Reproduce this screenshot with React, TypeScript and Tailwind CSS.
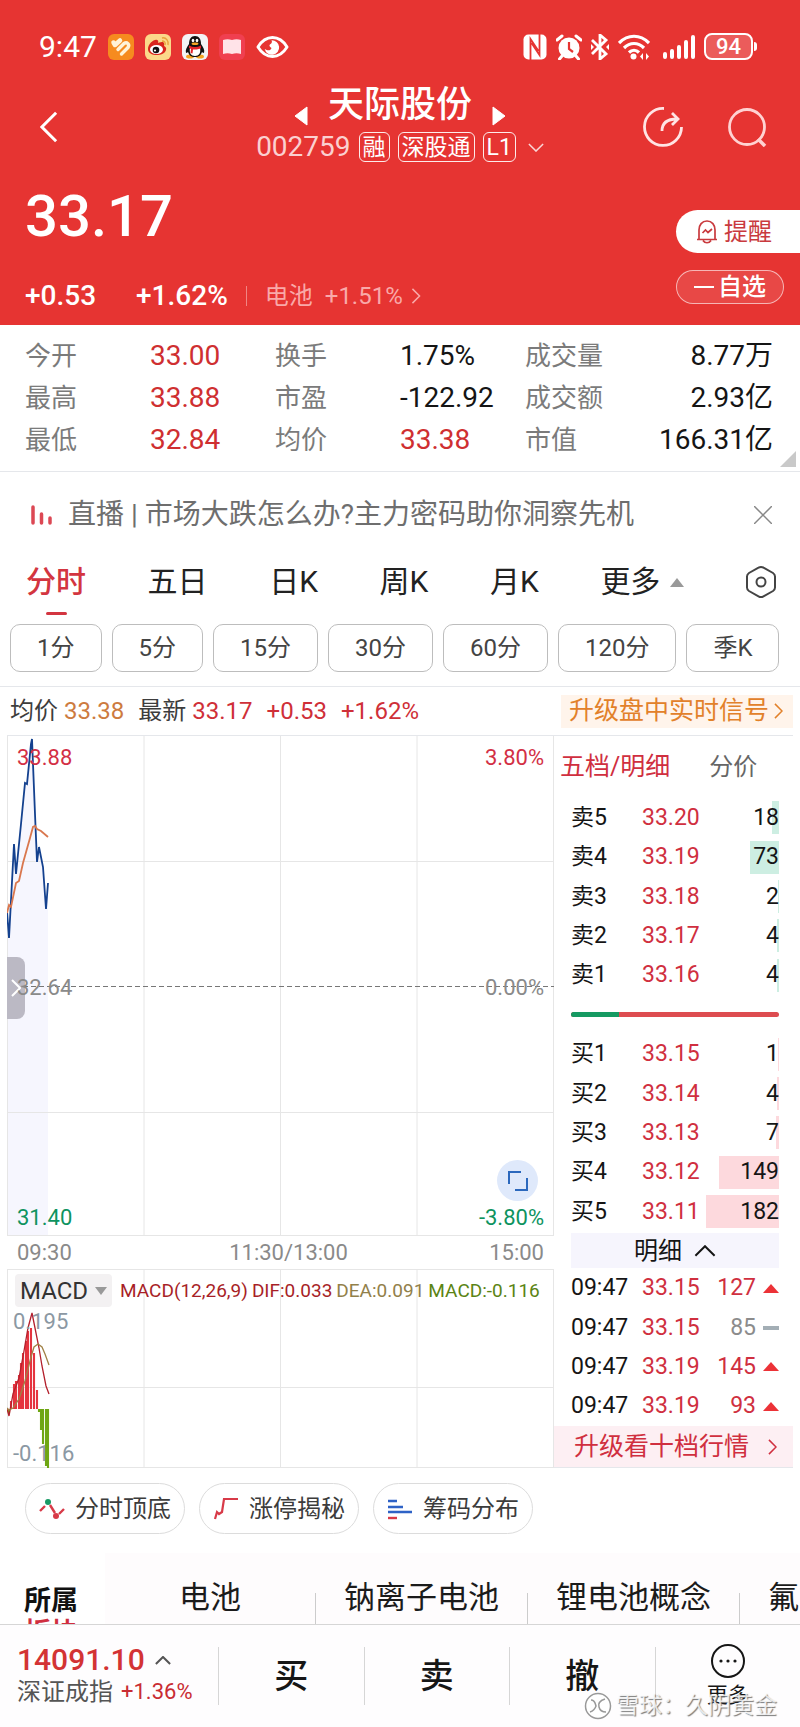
import { ReactNode } from "react";
import clsx from "clsx";

const stats = [
  ["今开", "33.00", "换手", "1.75%", "成交量", "8.77万"],
  ["最高", "33.88", "市盈", "-122.92", "成交额", "2.93亿"],
  ["最低", "32.84", "均价", "33.38", "市值", "166.31亿"],
];

const periods = ["1分", "5分", "15分", "30分", "60分", "120分", "季K"];

const sells = [
  { label: "卖5", price: "33.20", qty: 18 },
  { label: "卖4", price: "33.19", qty: 73 },
  { label: "卖3", price: "33.18", qty: 2 },
  { label: "卖2", price: "33.17", qty: 4 },
  { label: "卖1", price: "33.16", qty: 4 },
];

const buys = [
  { label: "买1", price: "33.15", qty: 1 },
  { label: "买2", price: "33.14", qty: 4 },
  { label: "买3", price: "33.13", qty: 7 },
  { label: "买4", price: "33.12", qty: 149 },
  { label: "买5", price: "33.11", qty: 182 },
];

const trades = [
  { time: "09:47", price: "33.15", qty: 127, up: true },
  { time: "09:47", price: "33.15", qty: 85, up: false },
  { time: "09:47", price: "33.19", qty: 145, up: true },
  { time: "09:47", price: "33.19", qty: 93, up: true },
];

const pricePoints = "0,175 2,202 7,108 9,138 14,88 18,47 20,48 24,8 25,3 28,78 30,126 32,111 36,131 39,173 41,147";
const avgPoints = "0,177 2,169 4,171 9,147 12,145 16,127 23,102 26,91 28,90 30,93 34,95 41,101";

// [x, y of the bar's end], the zero line is at y = 140
const macdBars = [
  [2, 144], [4, 132], [7, 115], [9, 112], [12, 106], [14, 94], [16, 84], [19, 72], [21, 62], [24, 59],
  [27, 84], [30, 121], [32, 143], [34, 161], [36, 175], [39, 197], [41, 199],
];

const Chevron = ({ dir, className }: { dir: "left" | "right" | "up" | "down"; className: string }) => {
  const paths = {
    left: ["0 0 10 18", "M9 1 1 9l8 8"],
    right: ["0 0 10 18", "m1 1 8 8-8 8"],
    up: ["0 0 18 10", "m1 9 8-8 8 8"],
    down: ["0 0 18 10", "m1 1 8 8 8-8"],
  };
  return (
    <svg viewBox={paths[dir][0]} className={className} fill="none" stroke="currentColor" strokeWidth="1.5" aria-hidden="true">
      <path d={paths[dir][1]} vectorEffect="non-scaling-stroke" />
    </svg>
  );
};

const StatusBar = () => (
  <div className="flex items-center justify-between pl-[39px] pr-[43px] pt-[33px]">
    <div className="flex items-center gap-[11px]">
      <span className="text-[30px] leading-[26px]">9:47</span>
      <svg viewBox="0 0 26 26" className="size-[26px]">
        <rect width="26" height="26" rx="6" fill="#f68b1f" />
        <path d="M5.500 8.500 7 11l5-4.500" fill="none" stroke="#fff3d8" strokeWidth="4.500" strokeLinecap="round" strokeLinejoin="round" />
        <path d="m10 15.500 6-6c3-2 6 1 4 4l-6.500 6.500" fill="none" stroke="#fff3d8" strokeWidth="3.400" strokeLinecap="round" strokeLinejoin="round" />
      </svg>
      <svg viewBox="0 0 26 26" className="size-[26px]">
        <rect width="26" height="26" rx="6" fill="#fbd98a" />
        <path d="M3 15c0-5 6-10 9-9 2 0 1 3 1 3s5-2 6 0c.6 1 0 3 0 3s3 1 2 4c-1 4-6 5-9 5-5 0-9-2-9-6Z" fill="#d9251c" />
        <ellipse cx="11.500" cy="15.500" rx="6.500" ry="4.500" fill="#fff" />
        <circle cx="11" cy="16" r="3.300" fill="#111" />
        <circle cx="10" cy="16.500" r="1.100" fill="#fff" />
        <path d="M17 4c4-1 7 3 6 7M17 7c2 0 4 1 3 4" fill="none" stroke="#e8a33a" strokeWidth="1.400" />
      </svg>
      <svg viewBox="0 0 26 26" className="size-[26px]">
        <rect width="26" height="26" rx="6" fill="#f3f3f5" />
        <ellipse cx="8" cy="22.500" rx="4" ry="2" fill="#f5a524" />
        <ellipse cx="18" cy="22.500" rx="4" ry="2" fill="#f5a524" />
        <path d="M13 2c-4 0-6 3-6 8-2 3-4 6-3 9 1 0 2-1 2-1 1 3 3 5 7 5s6-2 7-5c0 0 1 1 2 1 1-3-1-6-3-9 0-5-2-8-6-8Z" fill="#111" />
        <path d="M8 14c-1 5 1 8 5 8s6-3 5-8Z" fill="#fff" />
        <ellipse cx="11" cy="6.500" rx="1.300" ry="1.800" fill="#fff" />
        <ellipse cx="15" cy="6.500" rx="1.300" ry="1.800" fill="#fff" />
        <ellipse cx="13" cy="9.800" rx="3.500" ry="1.200" fill="#f5a524" />
        <path d="M7 11.500c4 2 8 2 12 0v3c-3 1-6 1-8 1l-.500 4-2-.500.500-4-2-1Z" fill="#e5222a" />
      </svg>
      <svg viewBox="0 0 26 26" className="size-[26px]">
        <rect width="26" height="26" rx="6" fill="#f03f50" />
        <path d="M4 6c3-1 6-1 9 0 3-1 6-1 9 0v14c-3-1-6-1-9 0-3-1-6-1-9 0Z" fill="#ffe3e8" />
      </svg>
      <svg viewBox="0 0 34 26" className="h-[26px] w-[33px]" fill="none" stroke="#fff" strokeWidth="3">
        <path d="M2 13c8-13 22-13 30 0-8 13-22 13-30 0Z" strokeLinejoin="round" />
        <path d="M16 6a7.500 7.500 0 1 1-7 9c3 2 6 2 7-1-2-1-3-3-1-4 1-1 2-2 1-4Z" fill="#fff" stroke="none" />
      </svg>
    </div>
    <div className="flex items-center gap-[9px]">
      <svg viewBox="0 0 24 26" className="h-[26px] w-[24px]">
        <rect x="0.500" y="0.500" width="23" height="25" rx="5" fill="#fff" />
        <path d="M7.500 26V5l8 12M16.500 0v21l-8-12" fill="none" stroke="#e63432" strokeWidth="1.800" />
      </svg>
      <svg viewBox="0 0 26 26" className="size-[26px]">
        <circle cx="13" cy="14" r="10.500" fill="#fff" />
        <path d="m1 6 5-4M25 6l-5-4M6 22l-2.500 3M20 22l2.500 3" stroke="#fff" strokeWidth="3" strokeLinecap="round" />
        <path d="M13 8v7l4 3" fill="none" stroke="#e63432" strokeWidth="2.200" />
      </svg>
      <svg viewBox="0 0 18 26" className="h-[26px] w-[18px]" fill="none" stroke="#fff" strokeWidth="2.800">
        <path d="m1 6 14 14-6 5V1l6 5L1 20" />
        <path d="m0 10 3 3-3 3ZM18 10l-3 3 3 3Z" fill="#fff" stroke="none" />
      </svg>
      <svg viewBox="0 0 32 26" className="h-[26px] w-[32px]" fill="none" stroke="#fff" strokeWidth="3.200">
        <path d="M1 9c9-9 21-9 30 0M6 14c6-6 14-6 20 0M11 18.500c3-3 7-3 10 0" />
        <circle cx="15.500" cy="22.500" r="3" fill="#fff" stroke="none" />
        <path d="m25 19-3 3.500 3 3.500ZM28 19l3 3.500-3 3.500Z" fill="#fff" stroke="none" />
      </svg>
      <svg viewBox="0 0 32 26" className="ml-1 h-[26px] w-[32px]" stroke="#fff" strokeWidth="4" strokeLinecap="round">
        <path d="M2 20v3M9 17v6M16 13v10M23 8v15M30 3v20" />
      </svg>
      <div className="flex items-center gap-px">
        <span className="flex h-[27px] w-[49px] items-center justify-center rounded-lg border-2 border-white bg-white/20 text-[22px] font-medium leading-none">94</span>
        <span className="h-[9px] w-[3px] rounded-r bg-white" />
      </div>
    </div>
  </div>
);

const Tag = ({ children }: { children: ReactNode }) => (
  <span className="flex h-[30px] items-center rounded-md border border-white/90 px-[3px] text-[23px] leading-none">{children}</span>
);

const Header = () => (
  <header className="bg-[#e63432] text-white">
    <StatusBar />
    <div className="grid grid-cols-[1fr_auto_1fr] items-center px-[33px] pt-6">
      <div className="flex pl-[7px] pt-2">
        <button aria-label="返回">
          <Chevron dir="left" className="h-[32px] w-[18px] stroke-[3]" />
        </button>
      </div>
      <div className="flex flex-col items-center gap-1.5">
        <div className="flex items-end gap-5">
          <button aria-label="上一只">
            <svg viewBox="0 0 14 20" className="h-5 w-[14px]"><path d="M13 1v18L1 10Z" fill="#fff" stroke="#fff" strokeLinejoin="round" /></svg>
          </button>
          <h1 className="text-[36px] font-medium leading-[42px]">天际股份</h1>
          <button aria-label="下一只">
            <svg viewBox="0 0 14 20" className="h-5 w-[14px]"><path d="M1 1v18l12-9Z" fill="#fff" stroke="#fff" strokeLinejoin="round" /></svg>
          </button>
        </div>
        <div className="flex items-center gap-2">
          <span className="text-[28px] leading-[30px] text-[#fbd0d0]">002759</span>
          <Tag>融</Tag>
          <Tag>深股通</Tag>
          <Tag>L1</Tag>
          <Chevron dir="down" className="ml-1 h-[9px] w-4 text-white/80" />
        </div>
      </div>
      <div className="flex items-center justify-end gap-11 pt-2">
        <button aria-label="分享">
          <svg viewBox="0 0 40 40" className="size-10" fill="none" stroke="#ffe4e4" strokeWidth="2.800">
            <path d="M21 1.500A18.500 18.500 0 1 0 38.500 20" />
            <path d="M19 24c0-8 5-12 15-12M29 6l6 6-6 6" />
          </svg>
        </button>
        <button aria-label="搜索">
          <svg viewBox="0 0 40 40" className="size-10" fill="none" stroke="#ffd2d2" strokeWidth="2.800">
            <circle cx="20" cy="20" r="17.500" />
            <path d="m31 32 7 7" strokeWidth="3.500" />
          </svg>
        </button>
      </div>
    </div>
    <div className="flex justify-between">
      <div className="pb-[13px] pl-[25px] pt-6">
        <div className="text-[58px] font-medium leading-[60px]">33.17</div>
        <div className="mt-[34px] flex h-8 items-center text-[28px] font-medium leading-8">
          <span>+0.53</span>
          <span className="ml-10">+1.62%</span>
          <span className="ml-[18px] h-5 w-px bg-white/40" />
          <a href="#" className="ml-[18px] flex items-center text-2xl font-normal text-[#f9a9a9]">
            <span>电池</span>
            <span className="ml-3">+1.51%</span>
            <Chevron dir="right" className="ml-2 h-4 w-[10px]" />
          </a>
        </div>
      </div>
      <div className="flex flex-col gap-[17px] pt-12">
        <button className="flex h-[43px] w-[124px] items-center gap-1.5 rounded-l-full bg-white pl-5 text-2xl text-[#c93a3e]">
          <svg viewBox="0 0 22 24" className="h-6 w-[22px]" fill="none" stroke="#c93a3e" strokeWidth="1.700">
            <path d="M1 19.500h20M3 19V10c0-5 3-9 8-9s8 4 8 9v9M7 20.500c2 3 6 3 8 0M6.500 13l3-3 2.500 2.500 4-3.500" />
          </svg>
          提醒
        </button>
        <button className="flex h-[34px] w-[108px] items-center justify-center gap-1 rounded-full border border-white/60 bg-white/10 text-2xl font-medium leading-none">
          <span className="h-0.5 w-5 bg-white" />
          自选
        </button>
      </div>
    </div>
  </header>
);

const Stats = () => (
  <section className="relative border-b border-gray-200 pb-[10px] pl-[25px] pr-[27px] pt-[10px]">
    <table className="w-full table-fixed">
      <colgroup>
        <col className="w-[125px]" />
        <col className="w-[125px]" />
        <col className="w-[125px]" />
        <col className="w-[125px]" />
        <col className="w-[100px]" />
        <col />
      </colgroup>
      <tbody>
        {stats.map((row) => (
          <tr key={row[0]} className="h-[42px]">
            {row.map((cell, i) =>
              i % 2 === 0 ? (
                <th key={i} scope="row" className="whitespace-nowrap p-0 text-left text-[26px] font-normal leading-8 text-[#7b7b7b]">{cell}</th>
              ) : (
                <td
                  key={i}
                  className={clsx(
                    "whitespace-nowrap p-0 text-[28px] leading-8",
                    i === 1 || cell === "33.38" ? "text-[#cf2f31]" : "text-[#151515]",
                    i === 5 && "text-right",
                  )}
                >
                  {cell}
                </td>
              ),
            )}
          </tr>
        ))}
      </tbody>
    </table>
    <svg viewBox="0 0 16 16" className="absolute bottom-1 right-1 size-4"><path d="M16 0v16H0Z" fill="#c9c9c9" /></svg>
  </section>
);

const LiveBanner = () => (
  <section className="flex h-[86px] items-center pl-[31px] pr-[28px]">
    <svg viewBox="0 0 21 20" className="h-5 w-[21px]" stroke="#dc4854" strokeWidth="3.500" strokeLinecap="round">
      <path d="M2 2v16M10.500 9v9M19 13v5" />
    </svg>
    <a href="#" className="ml-4 flex-1 truncate text-[28px] leading-9 text-[#6e6e6e]">直播 | 市场大跌怎么办?主力密码助你洞察先机</a>
    <button aria-label="关闭">
      <svg viewBox="0 0 18 18" className="size-[18px]" stroke="#888" strokeWidth="1.500"><path d="m0 0 18 18M18 0 0 18" /></svg>
    </button>
  </section>
);

const ChartTabs = () => (
  <section className="border-b border-gray-200 pb-3.5">
    <nav className="flex h-[66px] items-start justify-between pl-[26px] pr-6 pt-1.5 text-[30px] leading-[36px] text-[#222]">
      <button className="flex flex-col items-center gap-3 font-medium text-[#d33540]">
        分时
        <span className="h-[3px] w-[21px] rounded-full bg-[#d33540]" />
      </button>
      <button>五日</button>
      <button>日K</button>
      <button>周K</button>
      <button>月K</button>
      <button className="flex items-center gap-2.5">
        更多
        <svg viewBox="0 0 14 9" className="h-[9px] w-[14px]"><path d="M7 0l7 9H0Z" fill="#999" /></svg>
      </button>
      <button aria-label="设置">
        <svg viewBox="0 0 30 32" className="h-9 w-[30px]" fill="none" stroke="#444" strokeWidth="2">
          <path d="M12.500 1.700 3 7C1.500 8 1 9 1 10.500v11C1 23 1.500 24 3 25l9.500 5.300c1.700 1 3.300 1 5 0L27 25c1.500-1 2-2 2-3.500v-11C29 9 28.500 8 27 7l-9.500-5.300c-1.700-1-3.300-1-5 0Z" />
          <circle cx="15" cy="16" r="4.500" />
        </svg>
      </button>
    </nav>
    <div className="flex gap-2.5 pl-2.5">
      {periods.map((p) => (
        <button key={p} className="h-12 rounded-[10px] border border-[#bdbdbd] px-[26px] text-2xl leading-none text-[#444]">{p}</button>
      ))}
    </div>
  </section>
);

const InfoBar = () => (
  <div className="mx-[7px] flex h-[49px] items-center border-b border-gray-200 pl-[3px] text-2xl leading-8 text-[#cf2f38]">
    <span className="text-[#3d3d3d]">均价</span>
    <span className="ml-1.5 text-[#cd7b40]">33.38</span>
    <span className="ml-3.5 text-[#3d3d3d]">最新</span>
    <span className="ml-1.5">33.17</span>
    <span className="ml-3.5">+0.53</span>
    <span className="ml-3.5">+1.62%</span>
    <a href="#" className="ml-auto flex h-[33px] w-[232px] items-center justify-between bg-[#fff4eb] pl-2 pr-2.5 text-[25px] text-[#e2812a]">
      升级盘中实时信号
      <Chevron dir="right" className="h-4 w-[9px]" />
    </a>
  </div>
);

const PriceChart = () => (
  <div className="relative h-[500px] text-[22px] leading-6">
    <svg viewBox="0 0 547 500" preserveAspectRatio="none" className="block h-full w-full" fill="none">
      <polygon points={`${pricePoints} 41,500 0,500`} fill="#f6f6fe" />
      <path d="M.5 0v500M137 0v500M273.500 0v500M410 0v500M546.500 0v500M0 125.500h547M0 376.500h547M0 499.500h547" stroke="#e6e6e6" />
      <path d="M0 250.500h547" stroke="#777" strokeDasharray="5 3" />
      <polyline points={pricePoints} stroke="#14418f" strokeWidth="1.800" />
      <polyline points={avgPoints} stroke="#d9774e" strokeWidth="1.800" />
    </svg>
    <span className="absolute left-2.5 top-2.5 text-[#d32f45]">33.88</span>
    <span className="absolute right-2.5 top-2.5 text-[#d32f45]">3.80%</span>
    <button aria-label="展开" className="absolute left-0 top-[221px] flex h-[62px] w-[18px] items-center justify-center rounded-r-lg bg-[#bbb9c4] text-white">
      <Chevron dir="right" className="h-5 w-2.5 stroke-[2]" />
    </button>
    <span className="absolute left-2.5 top-[240px] text-[#8a8a8a]">32.64</span>
    <span className="absolute right-2.5 top-[240px] text-[#8a8a8a]">0.00%</span>
    <span className="absolute bottom-1.5 left-2.5 text-[#0e935f]">31.40</span>
    <span className="absolute bottom-1.5 right-2.5 text-[#0e935f]">-3.80%</span>
    <button aria-label="全屏" className="absolute bottom-[35px] right-4 flex size-[41px] items-center justify-center rounded-full bg-[#dfe9fb]">
      <svg viewBox="0 0 20 20" className="size-5" fill="none" stroke="#2b68bd" strokeWidth="2">
        <path d="M1 13V1h12M19 7v12H7" />
      </svg>
    </button>
  </div>
);

const MacdChart = () => (
  <div className="relative h-[199px]">
    <svg viewBox="0 0 547 199" preserveAspectRatio="none" className="block h-full w-full" fill="none">
      <path d="M0 .5h547M.5 0v199M137 0v199M273.500 0v199M410 0v199M546.500 0v199M0 118.500h547M0 198.500h547" stroke="#e6e6e6" />
      {macdBars.map(([x, y]) => (
        <path key={x} d={`M${x} 140V${y}`} stroke={y > 140 ? "#6ea613" : "#e5343f"} strokeWidth="2.100" />
      ))}
      <polyline points="0,140 2,147 6,125 12,109 17,82 21,59 25,44 28,59 32,79 35,97 39,117 42,125" stroke="#b3202c" strokeWidth="1.300" />
      <polyline points="0,139 2,141 6,139 12,130 18,112 24,88 27,78 31,75 35,78 38,85 42,96" stroke="#a08045" strokeWidth="1.300" />
    </svg>
    <div className="absolute inset-x-2 top-[5px] flex items-center gap-1 whitespace-nowrap text-[19px] leading-6 text-[#a81f27]">
      <button className="mr-1 flex h-[33px] w-[97px] items-center justify-between rounded bg-[#f3f1f2] px-[5px] text-2xl leading-none text-[#333]">
        MACD
        <svg viewBox="0 0 12 8" className="h-2 w-3"><path d="M0 0h12L6 8Z" fill="#999" /></svg>
      </button>
      <span>MACD(12,26,9)</span>
      <span>DIF:0.033</span>
      <span className="text-[#92804a]">DEA:0.091</span>
      <span className="text-[#5b8414]">MACD:-0.116</span>
    </div>
    <span className="absolute left-1.5 top-[41px] text-[22px] leading-6 text-[#8b98a3]">0.195</span>
    <span className="absolute bottom-0.5 left-1.5 text-[22px] leading-6 text-[#8b98a3]">-0.116</span>
  </div>
);

const DepthRow = ({ label, price, qty, sell }: { label: string; price: string; qty: number; sell?: boolean }) => (
  <li className="flex flex-1 items-center text-[23px] leading-8">
    <span className="w-[71px]">{label}</span>
    <span className="text-[#d02f3f]">{price}</span>
    <span className="relative flex h-[33px] flex-1 items-center justify-end">
      <span
        className={clsx("absolute inset-y-0 right-0 min-w-px", sell ? "bg-[#cdeee2]" : "bg-[#fdd9dd]")}
        style={{ width: `${(qty / 182) * 73}px` }}
      />
      <span className="relative">{qty}</span>
    </span>
  </li>
);

const OrderBook = () => (
  <aside className="flex w-[246px] shrink-0 flex-col pr-[7px] text-[#151515]">
    <div className="flex h-[62px] items-center gap-[39px] pl-1.5 leading-8">
      <button className="text-[25px] text-[#d02f3f]">五档/明细</button>
      <button className="text-2xl text-[#666]">分价</button>
    </div>
    <ul className="flex flex-[11_1_0%] flex-col pl-[17px] pr-3.5">
      {sells.map((row) => <DepthRow key={row.label} {...row} sell />)}
      <li className="flex flex-1 items-center">
        <div className="flex h-[5px] w-full overflow-hidden rounded-full bg-[#dd4c50]">
          <div className="w-[23%] bg-[#159a62]" />
        </div>
      </li>
      {buys.map((row) => <DepthRow key={row.label} {...row} />)}
    </ul>
    <button className="ml-[17px] mr-3.5 mt-0.5 flex h-[35px] items-center justify-center gap-3 bg-[#f6f5fd] text-2xl leading-none">
      明细
      <Chevron dir="up" className="h-3 w-[22px] stroke-[2]" />
    </button>
    <ul className="flex flex-[4_1_0%] flex-col pl-[17px] pr-3.5">
      {trades.map((t, i) => (
        <li key={i} className="flex flex-1 items-center text-[23px] leading-8 text-[#d02f3f]">
          <span className="w-[71px] text-[#151515]">{t.time}</span>
          <span>{t.price}</span>
          <span className={clsx("ml-auto mr-[7px]", !t.up && "text-[#8c8c8c]")}>{t.qty}</span>
          {t.up ? (
            <svg viewBox="0 0 16 9" className="h-[9px] w-4"><path d="m8 0 8 9H0Z" fill="#ec3237" /></svg>
          ) : (
            <span className="h-1 w-4 bg-[#a3aeb5]" />
          )}
        </li>
      ))}
    </ul>
    <a href="#" className="flex h-[42px] items-center justify-between border-b border-gray-200 bg-[#fdeff3] pl-5 pr-4 text-[25px] leading-8 text-[#d02f3f]">
      升级看十档行情
      <Chevron dir="right" className="h-4 w-[9px]" />
    </a>
  </aside>
);

const Tool = ({ icon, children }: { icon: ReactNode; children: ReactNode }) => (
  <button className="flex h-[51px] items-center gap-2.5 rounded-full border border-[#dcdcdc] px-[13px] text-2xl leading-none text-[#3c3c3c]">
    <svg viewBox="0 0 26 24" className="h-6 w-[26px]" fill="none">{icon}</svg>
    {children}
  </button>
);

const Tools = () => (
  <section className="flex gap-3.5 pl-[25px] pt-[15px]">
    <Tool
      icon={
        <>
          <path d="m1 14 5-5M20 17l5-5M11 8l5 8" stroke="#d83a48" strokeWidth="2.400" />
          <circle cx="9" cy="5" r="3" fill="#199a65" />
          <circle cx="17" cy="19" r="3" fill="#d83a48" />
        </>
      }
    >
      分时顶底
    </Tool>
    <Tool icon={<path d="M2 22l2-7 2 2 3-2 2-13h14" stroke="#d83a48" strokeWidth="2.200" />}>涨停揭秘</Tool>
    <Tool
      icon={
        <>
          <path d="M1 4h9M1 10h15M1 15h24" stroke="#2e62c6" strokeWidth="2.400" />
          <path d="M1 21h9" stroke="#d83a48" strokeWidth="2.400" />
        </>
      }
    >
      筹码分布
    </Tool>
  </section>
);

const Sectors = () => (
  <section className="mt-[19px] flex h-[71px] overflow-hidden">
    <div className="w-[105px] shrink-0 pl-6 pt-8 text-[27px] font-bold leading-[32px] text-[#111]">
      所属
      <div className="text-[#d02f3f]">板块</div>
    </div>
    <div className="flex flex-1 items-end overflow-hidden whitespace-nowrap bg-[#fefcfd] text-[31px] leading-[52px] text-[#1b1b1b]">
      {["电池", "钠离子电池", "锂电池概念", "氟"].map((name, i) => (
        <a key={name} href="#" className={clsx("flex shrink-0 items-end", i === 0 ? "pl-[74px]" : "pl-[28px]")}>
          {name}
          <span className={clsx("h-[31px] w-px bg-[#ccc]", i === 0 ? "ml-[74px]" : "ml-[28px]")} />
        </a>
      ))}
    </div>
  </section>
);

const BottomBar = () => (
  <footer className="relative flex h-[104px] items-start border-t border-[#d6d6d6] bg-[#fefdfe] pt-[22px] text-[#161616]">
    <a href="#" className="w-[218px] pl-[17px]">
      <span className="flex items-center gap-2.5 text-[30px] font-medium leading-[26px] text-[#d33334]">
        14091.10
        <Chevron dir="up" className="h-[9px] w-4 stroke-[2] text-[#555]" />
      </span>
      <span className="mt-1 flex items-center gap-2 text-2xl leading-[30px] text-[#555]">
        深证成指 <span className="text-[22px] text-[#c92c33]">+1.36%</span>
      </span>
    </a>
    {["买", "卖", "撤"].map((name) => (
      <button key={name} className="h-[58px] flex-1 border-l border-[#d6d6d6] text-[34px] font-medium leading-[58px]">{name}</button>
    ))}
    <button className="flex h-[58px] flex-1 flex-col items-center gap-1 border-l border-[#d6d6d6] text-[21px] leading-6">
      <svg viewBox="0 0 36 36" className="-mt-1 size-9 shrink-0" fill="#161616">
        <circle cx="18" cy="18" r="16" fill="none" stroke="#161616" strokeWidth="2" />
        <circle cx="11" cy="18" r="1.600" />
        <circle cx="18" cy="18" r="1.600" />
        <circle cx="25" cy="18" r="1.600" />
      </svg>
      更多
    </button>
    <div className="pointer-events-none absolute bottom-2 right-[23px] flex items-center gap-1 text-[23px] leading-7 text-white/80 [text-shadow:1px_1px_1px_#777]">
      <svg viewBox="0 0 28 28" className="size-7" fill="none" stroke="#999" strokeWidth="1.500">
        <circle cx="14" cy="14" r="12.500" fill="#ffffffb0" />
        <path d="M7 8c4 0 4 3 5 6-1 3-3 5-6 6M21 7c-6 2-7 5-6 8 1 4 3 5 7 5" />
      </svg>
      雪球：久阴黄金
    </div>
  </footer>
);

export default function App() {
  return (
    <div className="overflow-hidden bg-white font-[Roboto,'Noto_Sans_CJK_SC',sans-serif]">
      <Header />
      <Stats />
      <LiveBanner />
      <ChartTabs />
      <InfoBar />
      <main className="flex pl-[7px]">
        <div className="min-w-0 flex-1">
          <PriceChart />
          <div className="flex h-[33px] items-center justify-between px-2.5 text-[22px] leading-6 text-[#8a8a8a]">
            <span>09:30</span>
            <span className="ml-4">11:30/13:00</span>
            <span>15:00</span>
          </div>
          <MacdChart />
        </div>
        <OrderBook />
      </main>
      <Tools />
      <Sectors />
      <BottomBar />
    </div>
  );
}
